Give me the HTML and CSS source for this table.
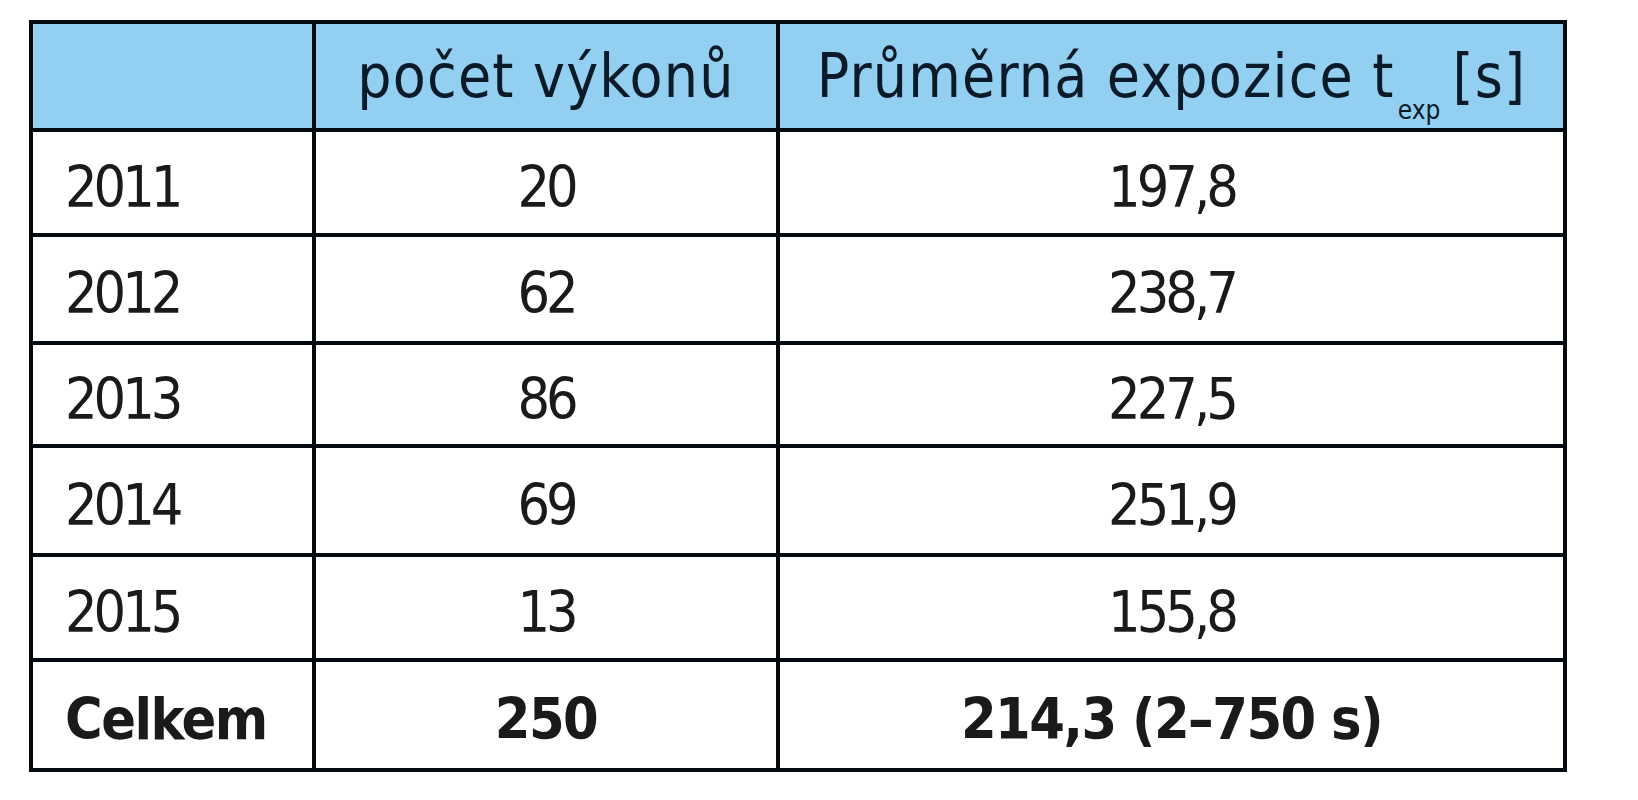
FILE: index.html
```html
<!DOCTYPE html>
<html lang="cs">
<head>
<meta charset="utf-8">
<title>Tabulka</title>
<link rel="stylesheet" href="styles.css">
</head>
<body>
<div class="table">
  <div class="cell head first"></div>
  <div class="cell head">počet výkonů</div>
  <div class="cell head">Průměrná expozice t<span class="sub">exp</span>[s]</div>

  <div class="cell first">2011</div>
  <div class="cell">20</div>
  <div class="cell">197,8</div>

  <div class="cell first">2012</div>
  <div class="cell">62</div>
  <div class="cell">238,7</div>

  <div class="cell first">2013</div>
  <div class="cell">86</div>
  <div class="cell">227,5</div>

  <div class="cell first">2014</div>
  <div class="cell">69</div>
  <div class="cell">251,9</div>

  <div class="cell first">2015</div>
  <div class="cell">13</div>
  <div class="cell">155,8</div>

  <div class="cell first total">Celkem</div>
  <div class="cell total">250</div>
  <div class="cell total">214,3 (2–750 s)</div>
</div>
</body>
</html>
```

FILE: styles.css
```css
html, body {
  margin: 0;
  padding: 0;
  background: #ffffff;
}

body {
  padding: 20px 0 0 29px;
  font-family: "DejaVu Sans Condensed", "Liberation Sans", sans-serif;
  font-size: 57px;
  color: #1a1a1a;
}

.table {
  display: inline-grid;
  grid-template-columns: 279px 460px 783px;
  grid-template-rows: 104px 101px 104px 99px 105px 101px 106px;
  gap: 4px;
  padding: 4px;
  background: #050a10;
}

.cell {
  background: #ffffff;
  display: flex;
  align-items: center;
  justify-content: center;
  padding-top: 8px;
  box-sizing: border-box;
  white-space: nowrap;
  letter-spacing: -4px;
}

.cell.first {
  justify-content: flex-start;
  padding-left: 32px;
}

.cell.head {
  background: #92cff0;
  color: #0b1a28;
  font-size: 60px;
  padding-top: 0;
  letter-spacing: 1.2px;
}

.sub {
  font-size: 26px;
  letter-spacing: 0;
  position: relative;
  top: 34px;
  margin: 0 12px 0 3px;
}

.cell.total {
  font-weight: bold;
  letter-spacing: -1.5px;
}
```
